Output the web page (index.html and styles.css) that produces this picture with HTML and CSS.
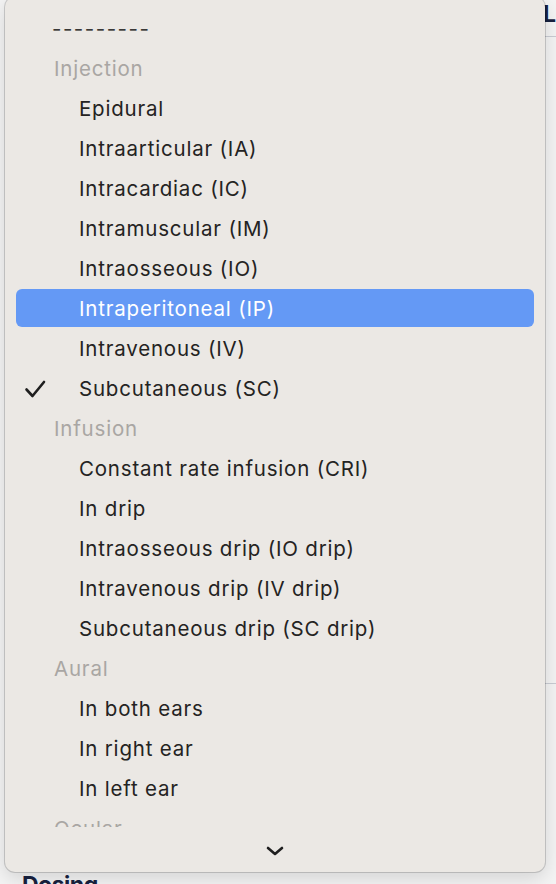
FILE: index.html
```html
<!DOCTYPE html>
<html>
<head>
<meta charset="utf-8">
<link rel="stylesheet" href="styles.css">
</head>
<body>
<div class="page">
  <div class="page-head"><span class="title">Li</span></div>
  <div class="page-rule rule-1"></div>
  <div class="page-body"></div>
  <div class="page-rule rule-2"></div>
  <div class="page-foot"><span class="title">Dosing</span></div>
</div>

<div class="menu">
  <div class="menu-list">
    <div class="row top">---------</div>
    <div class="row group">Injection</div>
    <div class="row item">Epidural</div>
    <div class="row item">Intraarticular (IA)</div>
    <div class="row item">Intracardiac (IC)</div>
    <div class="row item">Intramuscular (IM)</div>
    <div class="row item">Intraosseous (IO)</div>
    <div class="row item active">Intraperitoneal (IP)</div>
    <div class="row item">Intravenous (IV)</div>
    <div class="row item checked">
      <svg class="check" width="22" height="20" viewBox="0 0 22 20"><path d="M2.5 10.5 L8.5 17 L20 3" fill="none" stroke="#1f1f1f" stroke-width="2.6" stroke-linecap="round" stroke-linejoin="round"/></svg>
      Subcutaneous (SC)
    </div>
    <div class="row group">Infusion</div>
    <div class="row item">Constant rate infusion (CRI)</div>
    <div class="row item">In drip</div>
    <div class="row item">Intraosseous drip (IO drip)</div>
    <div class="row item">Intravenous drip (IV drip)</div>
    <div class="row item">Subcutaneous drip (SC drip)</div>
    <div class="row group">Aural</div>
    <div class="row item">In both ears</div>
    <div class="row item">In right ear</div>
    <div class="row item">In left ear</div>
    <div class="row group">Ocular</div>
    <div class="row item">In both eyes</div>
  </div>
  <div class="menu-foot">
    <svg width="18" height="10" viewBox="0 0 18 10"><path d="M2 2 L9 8 L16 2" fill="none" stroke="#1f1f1f" stroke-width="2.6" stroke-linecap="round" stroke-linejoin="round"/></svg>
  </div>
</div>
</body>
</html>
```
FILE: styles.css
```css
html, body {
  margin: 0;
  padding: 0;
}
body {
  width: 556px;
  height: 884px;
  overflow: hidden;
  background: #f4f4f4;
  font-family: Inter, "Noto Sans", "Liberation Sans", sans-serif;
  position: relative;
}
.page {
  display: flex;
  flex-direction: column;
  padding-left: 22px;
}
.page-head {
  height: 36px;
  display: flex;
  align-items: flex-start;
  padding-left: 521px;
}
.title {
  font-size: 23px;
  font-weight: 700;
  color: #17213f;
  line-height: 26px;
  padding-top: 1px;
  white-space: nowrap;
  letter-spacing: -0.5px;
}
.page-rule {
  height: 1px;
  background: #c9ccd3;
}
.page-body {
  height: 56px;
}
.rule-2 {
  margin-top: 590px;
}
.page-foot {
  margin-top: 188px;
}
.menu {
  position: absolute;
  left: 5px;
  top: -3px;
  width: 540px;
  height: 875px;
  border-radius: 10px;
  background: #ebe8e4;
  box-shadow: 0 0 0 1px rgba(0, 0, 0, 0.16), 0 6px 20px rgba(0, 0, 0, 0.14);
  display: flex;
  flex-direction: column;
  overflow: hidden;
}
.menu-list {
  height: 819px;
  padding-top: 11px;
  overflow: hidden;
  display: flex;
  flex-direction: column;
}
.row {
  flex: none;
  height: 38px;
  margin: 1px 11px;
  border-radius: 6px;
  display: flex;
  align-items: center;
  font-size: 20.5px;
  letter-spacing: 0.8px;
  color: #242322;
  position: relative;
  white-space: nowrap;
}
.top {
  padding-left: 36px;
  color: #3a3937;
  letter-spacing: 1.5px;
}
.group {
  padding-left: 38px;
  color: #a9a6a3;
}
.item {
  padding-left: 63px;
}
.active {
  background: #6499f5;
  color: #ffffff;
}
.check {
  position: absolute;
  left: 8px;
  top: 10px;
}
.menu-foot {
  flex: 1;
  display: flex;
  justify-content: center;
  align-items: flex-start;
  padding-top: 19px;
}
```
